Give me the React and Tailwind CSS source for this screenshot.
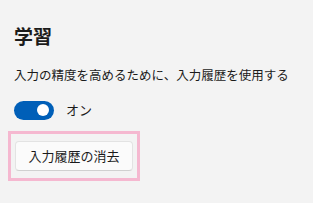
export default function App() {
  const font = { fontFamily: '"Noto Sans CJK JP", "Noto Sans", sans-serif' };

  return (
    <div className="w-[313px] h-[203px] bg-[#f3f3f3] text-[#1b1b1b] overflow-hidden" style={font}>
      <div className="flex flex-col pl-[14px] pt-[22px]">
        {/* 見出し */}
        <h2 className="text-[19px] leading-[28px] h-[28px] font-bold">学習</h2>

        <p className="mt-[15px] text-[12.5px] leading-[20px] h-[20px]">
          入力の精度を高めるために、入力履歴を使用する
        </p>

        {/* トグル */}
        <div className="mt-[15px] flex items-center h-[20px]">
          <div className="w-[40px] h-[19px] rounded-full bg-[#005fb8] flex items-center justify-end pr-[5px]">
            <div className="w-[12px] h-[12px] rounded-full bg-white" />
          </div>
          <span className="ml-[12px] text-[13px] leading-[20px]">オン</span>
        </div>

        {/* 入力履歴の消去 */}
        <div className="mt-[11px] -ml-[6px] w-[132px] h-[50px] border-[3px] border-[#f5b8d0] pl-[4px] pt-[7px]">
          <button className="w-[118px] h-[30px] rounded-[4px] bg-[#fbfbfb] border border-[#e3e3e3] border-b-[#d0d0d0] text-[13px] leading-[28px] text-[#1b1b1b]">
            入力履歴の消去
          </button>
        </div>
      </div>
    </div>
  );
}
